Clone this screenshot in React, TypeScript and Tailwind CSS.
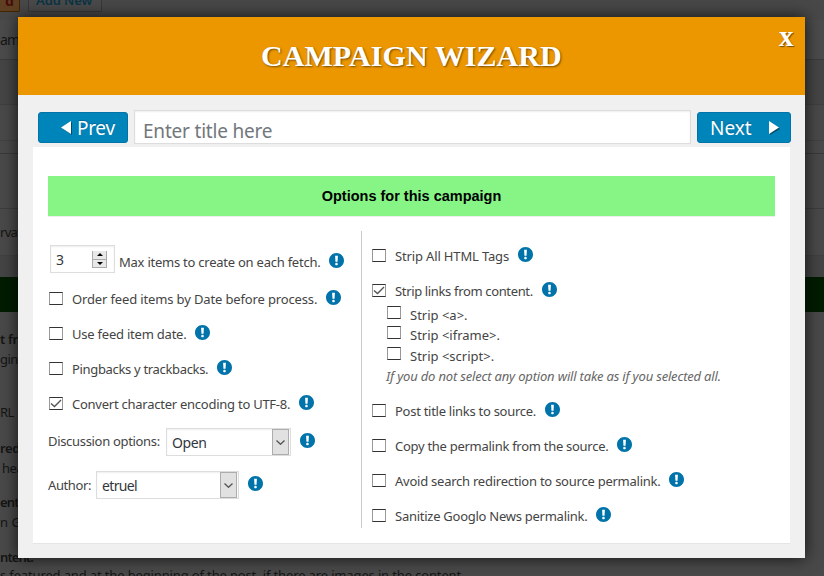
import React from "react";

function Info({ className = "" }: { className?: string }) {
  return (
    <svg viewBox="2 2 16 16" className={`h-[15px] w-[15px] shrink-0 ${className}`}>
      <path
        fill="#0073aa"
        d="M10 2c4.42 0 8 3.58 8 8s-3.58 8-8 8-8-3.58-8-8 3.58-8 8-8zm1.13 9.38l.35-6.46H8.52l.35 6.46h2.26zm-.09 3.36c.24-.23.37-.55.37-.96 0-.42-.12-.74-.36-.97s-.59-.35-1.06-.35-.82.12-1.07.35-.37.55-.37.97c0 .41.13.73.38.96.26.23.61.34 1.06.34s.8-.11 1.05-.34z"
      />
    </svg>
  );
}

function Check({ checked = false }: { checked?: boolean }) {
  return (
    <span className="flex h-[13px] w-[14px] shrink-0 items-center justify-center border border-x-[#999] border-y-[#333] bg-white">
      {checked && (
        <svg viewBox="0 0 12 11" className="h-[11px] w-[12px]">
          <path d="M1 5.5 4.5 8.5 11 2" fill="none" stroke="#555" strokeWidth="1.4" />
        </svg>
      )}
    </span>
  );
}

function Option({ label, width, checked }: { label: string; width: string; checked?: boolean }) {
  return (
    <div className="flex h-[35px] items-center">
      <Check checked={checked} />
      <span className={`ml-[9px] mt-[2px] whitespace-nowrap ${width}`}>{label}</span>
      <Info className="-mt-[2px] ml-[9px]" />
    </div>
  );
}

function SubOption({ label, height }: { label: string; height: string }) {
  return (
    <div className={`flex items-start ${height}`}>
      <Check />
      <span className="ml-[9px] whitespace-nowrap leading-[18px]">{label}</span>
    </div>
  );
}

function Select({ value, width, tracking }: { value: string; width: string; tracking: string }) {
  return (
    <span className={`flex h-7 shrink-0 border border-[#ddd] bg-white pr-px shadow-[inset_0_1px_2px_rgba(0,0,0,0.07)] ${width}`}>
      <span className={`flex-1 pl-[5px] pt-px text-[14px] leading-[26px] text-[#32373c] ${tracking}`}>{value}</span>
      <span className="flex w-[17px] items-center justify-center border border-[#adadad] bg-[#e1e1e1]">
        <svg viewBox="0 0 9 5" className="h-[5px] w-[9px]">
          <path d="M.5.5 4.5 4.3 8.5.5" fill="none" stroke="#555" strokeWidth="1.3" />
        </svg>
      </span>
    </span>
  );
}

function Backdrop() {
  return (
    <div className="flex h-[576px] w-[824px] flex-col overflow-hidden bg-[#494949] text-[14px] leading-5 text-[#151515]">
      <div className="flex h-5 shrink-0 items-start bg-[#484848]">
        <div className="h-3 w-5 overflow-hidden rounded-br-[2px] border-b border-r border-[#422600] bg-[#604022] pl-[5px] font-bold leading-[2px] text-[#480c0c]">d</div>
        <div className="ml-2 h-3 w-[74px] overflow-hidden whitespace-nowrap rounded-b-[2px] border border-t-0 border-[#383838] bg-[#4a4a4a] pl-[7px] text-[13px] font-semibold leading-[0px] tracking-[-0.1px] text-[#0a3445]">Add New</div>
      </div>
      <div className="h-10 shrink-0 border-b border-[#3b3b3b] bg-[#4b4b4b] pt-[10px] tracking-[-0.8px]">amp</div>
      <div className="h-[45px] shrink-0 border-b border-[#3f3f3f] bg-[#454545]" />
      <div className="h-9 shrink-0 border-b border-[#424242]" />
      <div className="h-[13px] shrink-0 border-b border-[#393939]" />
      <div className="h-[55px] shrink-0 border-b border-[#3d3d3d]" />
      <div className="h-[47px] shrink-0 border-b border-[#404040] pt-[13px] text-[13px] tracking-[-0.7px]">rvat</div>
      <div className="h-[21px] shrink-0 bg-[#444]" />
      <div className="h-[35px] shrink-0 bg-[#001c00]" />
      <div className="h-[264px] shrink-0 pt-[17px] text-[13px]">
        <div className="h-5 font-semibold tracking-[-0.3px]">t fr</div>
        <div className="h-[53px] tracking-[-0.6px]">gina</div>
        <div className="h-[36px] tracking-[-0.5px]">RL</div>
        <div className="h-5 font-semibold tracking-[-0.4px]">red</div>
        <div className="h-[34px] pl-[2px] tracking-[-0.5px]">hea</div>
        <div className="h-5 font-semibold tracking-[-0.8px]">ent.</div>
        <div className="h-[35px]">n Go</div>
        <div className="h-[18px] font-semibold tracking-[-0.9px]">ntent.</div>
        <div className="whitespace-nowrap tracking-[-0.14px]">s featured and at the beginning of the post, if there are images in the content.</div>
      </div>
    </div>
  );
}

export default function App() {
  return (
    <div className="relative h-[576px] w-[824px] overflow-hidden font-['Noto_Sans','Open_Sans',sans-serif]">
      <Backdrop />
      <section className="absolute left-[18px] top-[17px] h-[541px] w-[787px] bg-[#f0f0f0] text-[13px] text-[#444] shadow-[0_0_15px_rgba(0,0,0,0.75)]">
        <header className="flex h-[78px] items-start bg-[#ec9700] font-['Liberation_Serif',serif] font-bold text-white">
          <h1 className="ml-[243px] mt-[21px] w-[302px] whitespace-nowrap text-[30px] leading-[36px] tracking-[0.07px] [text-shadow:1px_1px_2px_rgba(0,0,0,0.5)]">CAMPAIGN WIZARD</h1>
          <button className="ml-[216px] mt-[4px] text-[29px] leading-[30px] [text-shadow:1px_1px_1px_rgba(0,0,0,0.5)]">x</button>
        </header>
        <div className="flex h-[52px] items-start pl-5 pt-[15px]">
          <button className="mt-[2px] flex h-[31px] w-[90px] items-center rounded-[3px] border border-[#0073aa] bg-[#0085ba] pl-[22px] text-[19px] text-white [text-shadow:0_-1px_1px_#006799]">
            <svg viewBox="0 0 11 14" className="mr-[5px] mt-px h-[14px] w-[11px]">
              <path d="M11 1v13L2 8z" fill="#064b68" />
              <path d="M10 0v13L0 6.5z" fill="#fff" />
            </svg>
            <span className="mt-[2px] tracking-[-0.3px]">Prev</span>
          </button>
          <div className="ml-[6px] h-[34px] w-[557px] border border-[#ddd] bg-white pl-2 pt-[3px] text-[19px] leading-[34px] tracking-[-0.2px] text-[#72777c] shadow-[inset_0_1px_2px_rgba(0,0,0,0.07)]">Enter title here</div>
          <button className="ml-[6px] mt-[2px] flex h-[31px] w-[94px] items-center rounded-[3px] border border-[#0073aa] bg-[#0085ba] pl-3 text-[19px] text-white [text-shadow:0_-1px_1px_#006799]">
            <span className="mt-[2px] w-[59px] text-left">Next</span>
            <svg viewBox="0 0 11 14" className="mt-px h-[14px] w-[11px]">
              <path d="M1 1v13l10-6z" fill="#064b68" />
              <path d="M0 0v13l10-6.5z" fill="#fff" />
            </svg>
          </button>
        </div>
        <main className="ml-[15px] h-[397px] w-[757px] border-b border-[#e5e5e5] bg-white px-[15px] pt-[29px]">
          <h2 className="h-[41px] border-b border-[#eee] bg-[#86f586] text-center font-['Liberation_Sans',sans-serif] text-[14.5px] font-bold leading-10 text-black">Options for this campaign</h2>
          <div className="mt-[14px] flex h-[297px]">
            <div className="w-[314px] border-r border-[#ccc] pt-[8px]">
              <div className="flex h-[42px] items-center pl-[2px]">
                <span className="-mt-[2px] flex h-7 w-[65px] items-center border border-[#ddd] pl-[5px] text-[14px] text-[#32373c] shadow-[inset_0_1px_2px_rgba(0,0,0,0.07)]">
                  <span className="mt-px w-[36px]">3</span>
                  <span className="flex h-[17px] w-[15px] flex-col border-x border-[#aaa] bg-[#e8e8e8]">
                    <span className="flex h-2 items-center justify-center">
                      <svg viewBox="0 0 6 3" className="h-[3px] w-[6px]"><path d="M0 3 3 0l3 3z" /></svg>
                    </span>
                    <span className="h-px bg-[#aaa]" />
                    <span className="flex h-2 items-center justify-center border-b border-[#aaa]">
                      <svg viewBox="0 0 6 3" className="h-[3px] w-[6px]"><path d="m0 0 3 3 3-3z" /></svg>
                    </span>
                  </span>
                </span>
                <span className="ml-1 mt-[5px] w-[202px] whitespace-nowrap tracking-[-0.24px]">Max items to create on each fetch.</span>
                <Info className="ml-2" />
              </div>
              <div className="pl-px">
                <Option label="Order feed items by Date before process." width="w-[245px] tracking-[-0.14px]" />
                <Option label="Use feed item date." width="w-[114px] tracking-[-0.22px]" />
                <Option label="Pingbacks y trackbacks." width="w-[136px] tracking-[-0.33px]" />
                <Option label="Convert character encoding to UTF-8." width="w-[218px] tracking-[-0.25px]" checked />
              </div>
              <div className="flex h-[42px] items-center">
                <span className="w-[118px] whitespace-nowrap tracking-[-0.32px]">Discussion options:</span>
                <Select value="Open" width="w-[125px]" tracking="tracking-[-0.4px]" />
                <Info className="-mt-[3px] ml-[9px]" />
              </div>
              <div className="mt-px flex h-[42px] items-center">
                <span className="mt-px w-[48px] whitespace-nowrap tracking-[-0.4px]">Author:</span>
                <Select value="etruel" width="w-[143px]" tracking="tracking-[-0.65px]" />
                <Info className="-mt-[3px] ml-[9px]" />
              </div>
            </div>
            <div className="pl-[10px] pt-[7px]">
              <Option label="Strip All HTML Tags" width="w-[114px] tracking-[-0.15px]" />
              <Option label="Strip links from content." width="w-[138px] tracking-[-0.35px]" checked />
              <div className="-mt-[2px] h-[87px] pl-[15px]">
                <SubOption label="Strip <a>." height="h-5" />
                <SubOption label="Strip <iframe>." height="h-[21px]" />
                <SubOption label="Strip <script>." height="h-[20px]" />
                <p className="-ml-px whitespace-nowrap text-[13px] italic leading-[18px] tracking-[-0.18px] text-[#666]">If you do not select any option will take as if you selected all.</p>
              </div>
              <Option label="Post title links to source." width="w-[141px] tracking-[-0.27px]" />
              <Option label="Copy the permalink from the source." width="w-[213px] tracking-[-0.28px]" />
              <Option label="Avoid search redirection to source permalink." width="w-[265px] tracking-[-0.24px]" />
              <Option label="Sanitize Googlo News permalink." width="w-[192px] tracking-[-0.26px]" />
            </div>
          </div>
        </main>
      </section>
    </div>
  );
}
